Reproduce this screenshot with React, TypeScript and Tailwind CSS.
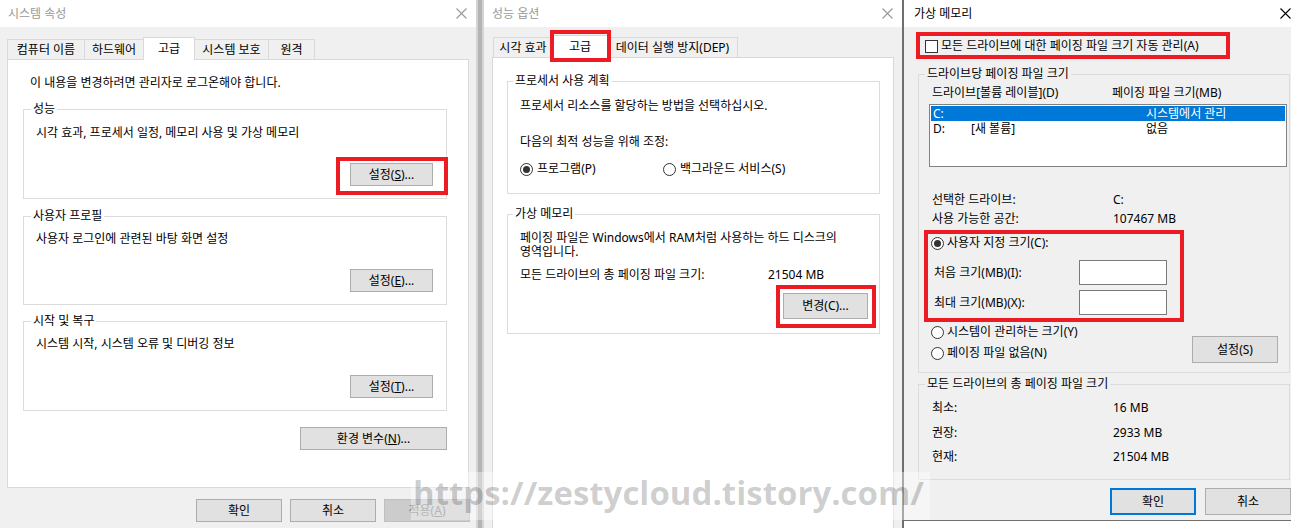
import React from 'react'

const BTN = 'flex items-center justify-center border border-[#adadad] bg-[#e1e1e1]'

function CloseIcon() {
  return (
    <svg width="11" height="11" viewBox="0 0 11 11">
      <path d="M0.5 0.5L10.5 10.5M10.5 0.5L0.5 10.5" stroke="currentColor" strokeWidth="1.1" fill="none" />
    </svg>
  )
}

function RedBox({ className }: { className: string }) {
  return <span className={`pointer-events-none absolute z-20 border-4 border-[#ed1c24] ${className}`} />
}

function Radio({ checked = false }: { checked?: boolean }) {
  return (
    <span className="flex h-[13px] w-[13px] shrink-0 items-center justify-center rounded-full border border-[#333333] bg-white">
      {checked && <span className="h-[7px] w-[7px] rounded-full bg-[#333333]" />}
    </span>
  )
}

function Group({
  label,
  className,
  legend,
  children,
}: {
  label: string
  className: string
  legend: string
  children: React.ReactNode
}) {
  return (
    <fieldset className={`shrink-0 border border-[#dcdcdc] ${className}`}>
      <legend className={`px-[2px] leading-4 ${legend}`}>{label}</legend>
      {children}
    </fieldset>
  )
}

function SystemProperties() {
  const tabs = [
    { label: '컴퓨터 이름', w: 'w-[78px]' },
    { label: '하드웨어', w: 'w-[60px]' },
    { label: '고급', w: 'w-[52px]', active: true },
    { label: '시스템 보호', w: 'w-[75px]' },
    { label: '원격', w: 'w-[47px]' },
  ]

  return (
    <div className="flex h-full w-[476px] shrink-0 flex-col bg-[#f0f0f0]">
      <div className="flex h-[27px] shrink-0 items-center justify-between bg-white pl-[8px] pr-[9px] text-[#999999]">
        <span>시스템 속성</span>
        <CloseIcon />
      </div>

      <div className="flex items-end px-[7px] pt-[10px]">
        {tabs.map((t, i) => (
          <div
            key={t.label}
            className={`${t.w} ${i > 0 ? '-ml-px' : ''} ${
              t.active ? 'relative z-10 -mb-px h-[23px] bg-white' : 'h-[20px]'
            } flex items-center justify-center border-x border-t border-[#d9d9d9]`}
          >
            {t.label}
          </div>
        ))}
      </div>

      <div className="mx-[7px] h-[429px] shrink-0 border border-[#d9d9d9] bg-white">
        <p className="pl-[22px] pt-[15px]">이 내용을 변경하려면 관리자로 로그온해야 합니다.</p>

        <Group label="성능" className="ml-[15px] mt-[10px] w-[424px]" legend="ml-[7px]">
          <div className="pb-[12px] pl-[12px] pr-[13px] pt-[8px]">
            <p>시각 효과, 프로세서 일정, 메모리 사용 및 가상 메모리</p>
            <div className="mt-[22px] flex justify-end">
              <div className="relative">
                <div className={`${BTN} h-[23px] w-[83px]`}>
                  설정(<u>S</u>)...
                </div>
                <RedBox className="bottom-[-9px] left-[-14px] right-[-15px] top-[-6px]" />
              </div>
            </div>
          </div>
        </Group>

        <Group label="사용자 프로필" className="ml-[15px] mt-[9px] w-[424px]" legend="ml-[7px]">
          <div className="pb-[12px] pl-[12px] pr-[13px] pt-[7px]">
            <p>사용자 로그인에 관련된 바탕 화면 설정</p>
            <div className="mt-[22px] flex justify-end">
              <div className={`${BTN} h-[23px] w-[83px]`}>
                설정(<u>E</u>)...
              </div>
            </div>
          </div>
        </Group>

        <Group label="시작 및 복구" className="ml-[15px] mt-[8px] w-[424px]" legend="ml-[7px]">
          <div className="pb-[12px] pl-[12px] pr-[13px] pt-[7px]">
            <p>시스템 시작, 시스템 오류 및 디버깅 정보</p>
            <div className="mt-[23px] flex justify-end">
              <div className={`${BTN} h-[23px] w-[83px]`}>
                설정(<u>T</u>)...
              </div>
            </div>
          </div>
        </Group>

        <div className="mr-[21px] mt-[16px] flex justify-end">
          <div className={`${BTN} h-[23px] w-[147px]`}>
            환경 변수(<u>N</u>)...
          </div>
        </div>
      </div>

      <div className="mt-[11px] flex justify-end gap-[8px] pr-[6px]">
        <div className={`${BTN} h-[23px] w-[86px]`}>확인</div>
        <div className={`${BTN} h-[23px] w-[86px]`}>취소</div>
        <div className="flex h-[23px] w-[86px] items-center justify-center border border-[#bfbfbf] bg-[#cccccc] text-[#838383]">
          적용(<u>A</u>)
        </div>
      </div>
    </div>
  )
}

function PerformanceOptions() {
  return (
    <div className="flex h-full w-[418px] shrink-0 flex-col overflow-hidden bg-[#f0f0f0]">
      <div className="flex h-[27px] shrink-0 items-center justify-between bg-white pl-[8px] pr-[9px] text-[#999999]">
        <span>성능 옵션</span>
        <CloseIcon />
      </div>

      <div className="flex items-end pl-[9px] pt-[8px]">
        <div className="flex h-[20px] w-[60px] items-center justify-center border-x border-t border-[#d9d9d9]">
          시각 효과
        </div>
        <div className="relative z-10 -mb-px -ml-px flex h-[23px] w-[56px] items-center justify-center border-x border-t border-[#d9d9d9] bg-white">
          고급
          <RedBox className="bottom-[-4px] left-[-3px] right-[-4px] top-[-6px]" />
        </div>
        <div className="-ml-px flex h-[20px] w-[131px] items-center justify-center border-x border-t border-[#d9d9d9]">
          데이터 실행 방지(DEP)
        </div>
      </div>

      <div className="ml-[8px] w-[402px] flex-1 border-x border-t border-[#d9d9d9] bg-white">
        <Group label="프로세서 사용 계획" className="ml-[14px] mt-[15px] w-[373px]" legend="ml-[5px]">
          <div className="pb-[16px] pl-[12px] pt-[9px]">
            <p>프로세서 리소스를 할당하는 방법을 선택하십시오.</p>
            <p className="mt-[20px]">다음의 최적 성능을 위해 조정:</p>
            <div className="mt-[11px] flex items-center">
              <div className="flex w-[143px] items-center gap-[4px]">
                <Radio checked />
                <span>프로그램(P)</span>
              </div>
              <div className="flex items-center gap-[4px]">
                <Radio />
                <span>백그라운드 서비스(S)</span>
              </div>
            </div>
          </div>
        </Group>

        <Group label="가상 메모리" className="ml-[14px] mt-[12px] w-[373px]" legend="ml-[5px]">
          <div className="pb-[14px] pl-[12px] pr-[11px] pt-[9px]">
            <p className="whitespace-nowrap leading-[14px]">
              페이징 파일은 Windows에서 RAM처럼 사용하는 하드 디스크의
              <br />
              영역입니다.
            </p>
            <div className="mt-[8px] flex">
              <span className="w-[248px]">모든 드라이브의 총 페이징 파일 크기:</span>
              <span>21504 MB</span>
            </div>
            <div className="mt-[10px] flex justify-end">
              <div className="relative">
                <div className={`${BTN} h-[26px] w-[85px]`}>변경(C)...</div>
                <RedBox className="bottom-[-9px] left-[-7px] right-[-8px] top-[-8px]" />
              </div>
            </div>
          </div>
        </Group>
      </div>
    </div>
  )
}

function VirtualMemory() {
  return (
    <div className="flex h-[521px] w-[396px] shrink-0 flex-col border-b border-[#6f6f6f] bg-[#f0f0f0]">
      <div className="flex h-[27px] shrink-0 items-center justify-between bg-white pl-[10px] pr-[9px]">
        <span>가상 메모리</span>
        <CloseIcon />
      </div>

      <div className="relative ml-[21px] mt-[11px] flex items-center gap-[3px] self-start">
        <span className="h-[13px] w-[13px] shrink-0 border border-[#333333] bg-white" />
        <span>모든 드라이브에 대한 페이징 파일 크기 자동 관리(A)</span>
        <RedBox className="left-[-9px] top-[-6px] h-[27px] w-[314px]" />
      </div>

      <Group label="드라이브당 페이징 파일 크기" className="ml-[14px] mt-[12px] w-[372px]" legend="ml-[6px]">
        <div className="pb-[9px] pl-[10px] pt-[3px]">
          <div className="flex pl-[3px]">
            <span className="w-[180px]">드라이브[볼륨 레이블](D)</span>
            <span>페이징 파일 크기(MB)</span>
          </div>
          <div className="mt-[3px] h-[63px] w-[358px] border border-[#828282] bg-white p-px">
            <div className="flex h-[15px] items-center bg-[#0078d7] pl-[2px] leading-[15px] text-white">
              <span className="w-[213px]">C:</span>
              <span>시스템에서 관리</span>
            </div>
            <div className="flex h-[15px] items-center pl-[2px] leading-[15px]">
              <span className="w-[38px]">D:</span>
              <span className="w-[175px]">[새 볼륨]</span>
              <span>없음</span>
            </div>
          </div>

          <div className="mt-[25px] flex pl-[3px]">
            <span className="w-[181px]">선택한 드라이브:</span>
            <span>C:</span>
          </div>
          <div className="mt-[3px] flex pl-[3px]">
            <span className="w-[181px]">사용 가능한 공간:</span>
            <span>107467 MB</span>
          </div>

          <div className="relative mt-[8px] pl-[2px]">
            <div className="flex items-center gap-[3px]">
              <Radio checked />
              <span>사용자 지정 크기(C):</span>
            </div>
            <div className="mt-[9px] flex items-center pl-[3px]">
              <span className="w-[145px]">처음 크기(MB)(I):</span>
              <span className="h-[25px] w-[88px] border border-[#7a7a7a] bg-white" />
            </div>
            <div className="mt-[5px] flex items-center pl-[3px]">
              <span className="w-[145px]">최대 크기(MB)(X):</span>
              <span className="h-[25px] w-[88px] border border-[#7a7a7a] bg-white" />
            </div>
            <RedBox className="left-[-5px] top-[-5px] h-[92px] w-[260px]" />
          </div>

          <div className="mr-[11px] mt-[9px] flex items-start justify-between pl-[2px]">
            <div className="flex flex-col gap-[5px]">
              <div className="flex items-center gap-[3px]">
                <Radio />
                <span>시스템이 관리하는 크기(Y)</span>
              </div>
              <div className="flex items-center gap-[3px]">
                <Radio />
                <span>페이징 파일 없음(N)</span>
              </div>
            </div>
            <div className={`${BTN} mt-[12px] h-[27px] w-[86px]`}>설정(S)</div>
          </div>
        </div>
      </Group>

      <Group label="모든 드라이브의 총 페이징 파일 크기" className="ml-[14px] mt-[3px] w-[372px]" legend="ml-[6px]">
        <div className="pb-[14px] pl-[13px] pt-[8px]">
          <div className="flex">
            <span className="w-[181px]">최소:</span>
            <span>16 MB</span>
          </div>
          <div className="mt-[9px] flex">
            <span className="w-[181px]">권장:</span>
            <span>2933 MB</span>
          </div>
          <div className="mt-[8px] flex">
            <span className="w-[181px]">현재:</span>
            <span>21504 MB</span>
          </div>
        </div>
      </Group>

      <div className="mt-[8px] flex justify-end gap-[9px] pr-[9px]">
        <div className="flex h-[27px] w-[86px] items-center justify-center border-2 border-[#0078d7] bg-[#e1e1e1]">
          확인
        </div>
        <div className={`${BTN} h-[27px] w-[86px]`}>취소</div>
      </div>
    </div>
  )
}

export default function App() {
  return (
    <div className="relative flex h-[528px] w-[1291px] overflow-hidden bg-white font-['Noto_Sans','Noto_Sans_CJK_KR',sans-serif] text-[12px] leading-4 text-black">
      <SystemProperties />
      <div className="h-full w-[8px] shrink-0 border-x-2 border-[#d4d4d4] bg-[#b3b3b3]" />
      <PerformanceOptions />
      <div className="h-full w-[2px] shrink-0 bg-[#6f6f6f]" />
      <VirtualMemory />

      {/* watermark */}
      <div className="pointer-events-none absolute left-[411px] top-[472px] z-50 h-[48px] whitespace-nowrap bg-white/40 pl-[2px] pr-[6px] font-['Open_Sans',sans-serif] text-[33px] font-bold leading-[41px] text-black/20">
        https://zestycloud.tistory.com/
      </div>
    </div>
  )
}
